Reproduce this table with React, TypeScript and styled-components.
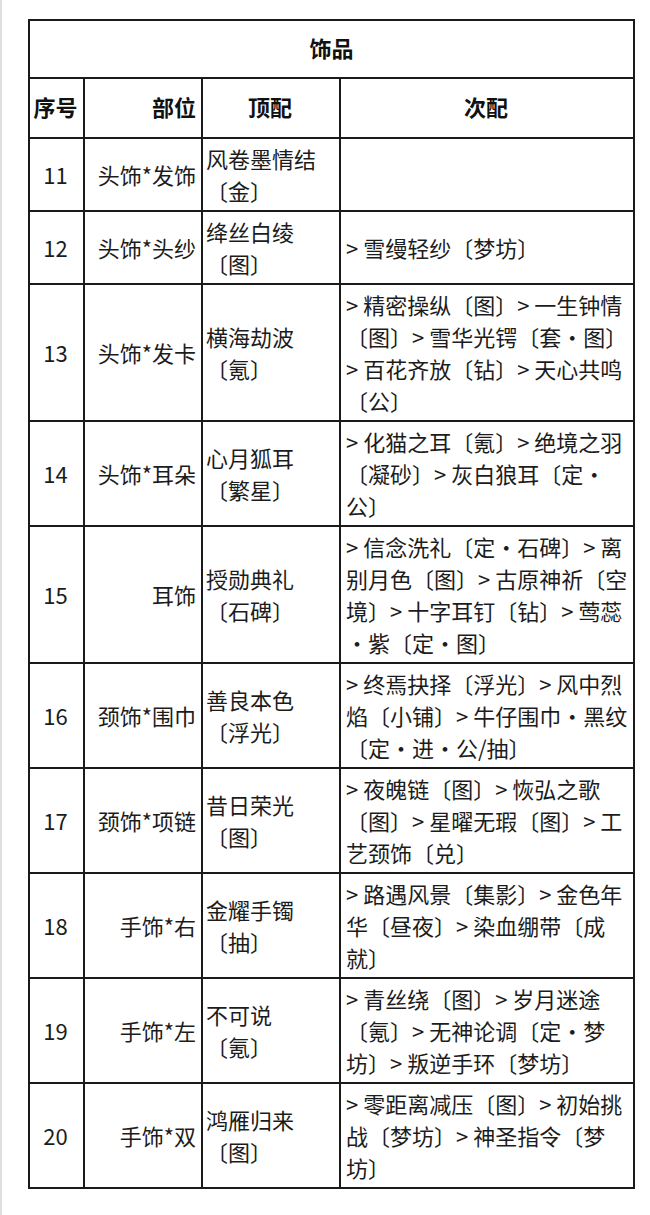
import React from "react";
import styled, { createGlobalStyle } from "styled-components";

interface Item {
  no: number;
  part: string;
  top: string[];
  sub: string[];
}

const items: Item[] = [
  { no: 11, part: "头饰*发饰", top: ["风卷墨情结", "〔金〕"], sub: [] },
  { no: 12, part: "头饰*头纱", top: ["绛丝白绫", "〔图〕"], sub: ["> 雪缦轻纱〔梦坊〕"] },
  {
    no: 13,
    part: "头饰*发卡",
    top: ["横海劫波", "〔氪〕"],
    sub: ["> 精密操纵〔图〕> 一生钟情", "〔图〕> 雪华光锷〔套・图〕", "> 百花齐放〔钻〕> 天心共鸣", "〔公〕"],
  },
  {
    no: 14,
    part: "头饰*耳朵",
    top: ["心月狐耳", "〔繁星〕"],
    sub: ["> 化猫之耳〔氪〕> 绝境之羽", "〔凝砂〕> 灰白狼耳〔定・", "公〕"],
  },
  {
    no: 15,
    part: "耳饰",
    top: ["授勋典礼", "〔石碑〕"],
    sub: ["> 信念洗礼〔定・石碑〕> 离", "别月色〔图〕> 古原神祈〔空", "境〕> 十字耳钉〔钻〕> 莺蕊", "・紫〔定・图〕"],
  },
  {
    no: 16,
    part: "颈饰*围巾",
    top: ["善良本色", "〔浮光〕"],
    sub: ["> 终焉抉择〔浮光〕> 风中烈", "焰〔小铺〕> 牛仔围巾・黑纹", "〔定・进・公/抽〕"],
  },
  {
    no: 17,
    part: "颈饰*项链",
    top: ["昔日荣光", "〔图〕"],
    sub: ["> 夜魄链〔图〕> 恢弘之歌", "〔图〕> 星曜无瑕〔图〕> 工", "艺颈饰〔兑〕"],
  },
  {
    no: 18,
    part: "手饰*右",
    top: ["金耀手镯", "〔抽〕"],
    sub: ["> 路遇风景〔集影〕> 金色年", "华〔昼夜〕> 染血绷带〔成", "就〕"],
  },
  {
    no: 19,
    part: "手饰*左",
    top: ["不可说", "〔氪〕"],
    sub: ["> 青丝绕〔图〕> 岁月迷途", "〔氪〕> 无神论调〔定・梦", "坊〕> 叛逆手环〔梦坊〕"],
  },
  {
    no: 20,
    part: "手饰*双",
    top: ["鸿雁归来", "〔图〕"],
    sub: ["> 零距离减压〔图〕> 初始挑", "战〔梦坊〕> 神圣指令〔梦", "坊〕"],
  },
];

const GlobalStyle = createGlobalStyle`
  html, body {
    margin: 0;
    padding: 0;
    background: #ffffff;
  }
  body {
    font-family: "Noto Sans CJK SC", "Noto Sans", sans-serif;
    color: #1c1c1c;
  }
`;

const Page = styled.div`
  box-sizing: border-box;
  width: 650px;
  min-height: 1215px;
  border-left: 2px solid #dedede;
  padding: 19px 0 0 26px;
`;

const Table = styled.table`
  border-collapse: collapse;
  table-layout: fixed;
  width: 605px;
  font-size: 22px;
  line-height: 32px;

  td,
  th {
    border: 2px solid #1a1a1a;
    vertical-align: middle;
    white-space: nowrap;
    overflow: visible;
  }
`;

const Title = styled.th`
  padding: 10px 0 14px;
  font-weight: 700;
  color: #111111;
  text-align: center;
`;

const Head = styled.th<{ $align?: string }>`
  padding: 11px 5px 15px 3px;
  font-weight: 700;
  color: #111111;
  text-align: ${({ $align }) => $align || "center"};
`;

const Cell = styled.td<{ $align?: string }>`
  padding: 3px 5px 4px 3px;
  text-align: ${({ $align }) => $align || "left"};
`;

const SubCell = styled(Cell)`
  padding-left: 5px;
`;

const Line = styled.span`
  display: block;
  white-space: pre;
`;

const Lines = ({ lines }: { lines: string[] }) => (
  <>
    {lines.map((line, index) => (
      <Line key={index}>{line}</Line>
    ))}
  </>
);

const App = () => {
  return (
    <Page>
      <GlobalStyle />
      <Table>
        <colgroup>
          <col style={{ width: 55 }} />
          <col style={{ width: 118 }} />
          <col style={{ width: 138 }} />
          <col style={{ width: 294 }} />
        </colgroup>
        <thead>
          <tr>
            <Title colSpan={4}>饰品</Title>
          </tr>
          <tr>
            <Head>序号</Head>
            <Head $align="right">部位</Head>
            <Head>顶配</Head>
            <Head>次配</Head>
          </tr>
        </thead>
        <tbody>
          {items.map((item) => (
            <tr key={item.no}>
              <Cell $align="center">{item.no}</Cell>
              <Cell $align="right">{item.part}</Cell>
              <Cell>
                <Lines lines={item.top} />
              </Cell>
              <SubCell>
                <Lines lines={item.sub} />
              </SubCell>
            </tr>
          ))}
        </tbody>
      </Table>
    </Page>
  );
};

export default App;
